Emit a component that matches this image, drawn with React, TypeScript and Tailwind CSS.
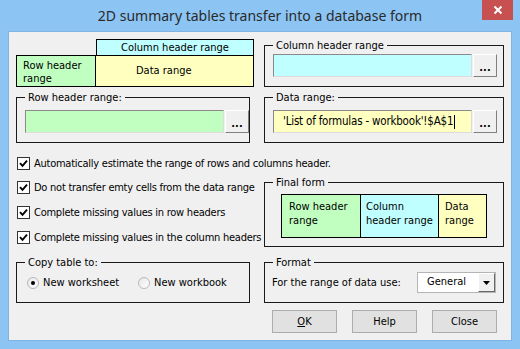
import React from "react";

const FONT = { fontFamily: '"DejaVu Sans Condensed", "Liberation Sans", sans-serif' };

function Group({
  title,
  className,
  children,
}: {
  title: string;
  className: string;
  children: React.ReactNode;
}) {
  return (
    <fieldset className={`border border-[#1a1a1a] ${className}`}>
      <legend className="ml-[8px] px-[3px] leading-[13px]">{title}</legend>
      {children}
    </fieldset>
  );
}

function Check({ label }: { label: string }) {
  return (
    <div className="flex items-center h-[13px] gap-[4px]">
      <span className="w-[13px] h-[13px] border border-[#333] bg-white flex items-center justify-center shrink-0">
        <svg width="9" height="9" viewBox="0 0 9 9">
          <path d="M1 4.2 L3.5 6.8 L8 1.6" stroke="#000" strokeWidth="1.9" fill="none" />
        </svg>
      </span>
      <span className="leading-[13px] whitespace-nowrap tracking-[-0.25px]">{label}</span>
    </div>
  );
}

function Radio({ label, on }: { label: string; on?: boolean }) {
  return (
    <div className="flex items-center gap-[4px] h-[13px]">
      <span className="w-[12px] h-[12px] rounded-full border border-[#b8b8b8] bg-gradient-to-br from-[#e6e6e6] to-white flex items-center justify-center shrink-0">
        {on && <span className="w-[4px] h-[4px] rounded-full bg-black" />}
      </span>
      <span className="leading-[13px] whitespace-nowrap">{label}</span>
    </div>
  );
}

function RangeInput({ bg, value }: { bg: string; value?: string }) {
  return (
    <div className="flex h-[23px]">
      <div
        className={`flex-1 flex items-center border border-t-[#8a8a8a] border-l-[#8a8a8a] border-b-[#dcdcdc] border-r-[#dcdcdc] pl-[9px] ${bg}`}
      >
        {value && (
          <span className="text-[11.5px] leading-[14px] whitespace-nowrap tracking-[-0.2px]">
            {value}
            <span className="inline-block w-px h-[14px] bg-black align-middle ml-px" />
          </span>
        )}
      </div>
      <button className="w-[24px] ml-px bg-[#f0f0f0] border border-t-white border-l-white border-b-[#808080] border-r-[#808080] flex items-end justify-center pb-[4px] text-[11px] leading-[8px] font-bold">
        ...
      </button>
    </div>
  );
}

function Btn({ children }: { children: React.ReactNode }) {
  return (
    <button className="w-[65px] h-[23px] bg-[#e1e1e1] border border-[#adadad] flex items-center justify-center leading-[13px]">
      {children}
    </button>
  );
}

export default function App() {
  return (
    <div className="w-[520px] h-[349px] bg-[#8cc4f4] flex flex-col text-[11px] text-black" style={FONT}>
      <div className="h-[31px] flex items-center relative shrink-0">
        <p
          className="flex-1 text-center text-[14px] text-[#2a2a2a] leading-[20px] pt-[1px]"
          style={{ fontFamily: '"Noto Sans", "Open Sans", sans-serif' }}
        >
          2D summary tables transfer into a database form
        </p>
        <button className="absolute right-[7px] top-0 w-[31px] h-[20px] bg-[#c75050] flex items-center justify-center">
          <svg width="10" height="10" viewBox="0 0 10 10">
            <path d="M1.5 1.5 L8.5 8.5 M8.5 1.5 L1.5 8.5" stroke="#fff" strokeWidth="2" />
          </svg>
        </button>
      </div>

      <div className="mx-[8px] h-[310px] bg-[#f0f0f0] border border-[#7fb3e3] px-[7px] pt-[7px] flex flex-col">
        {/* row 1 */}
        <div className="grid grid-cols-[234px_240px] gap-x-[14px]">
          <div className="grid grid-cols-[80px_158px] grid-rows-[17px_32px] w-[238px] h-[48px]">
            <div />
            <div className="border border-black bg-[#c0ffff] flex items-center justify-center leading-[13px]">
              Column header range
            </div>
            <div className="border border-black -mt-px h-[32px] bg-[#c0ffc0] pl-[6px] pt-[3px] leading-[13px] overflow-hidden">
              Row header
              <br />
              range
            </div>
            <div className="border border-black -mt-px -ml-px h-[32px] bg-[#ffffc0] flex items-center pl-[40px]">
              Data range
            </div>
          </div>
          <Group title="Column header range" className="h-[48px]">
            <div className="mt-[2px] pl-[8px] pr-[6px]">
              <RangeInput bg="bg-[#c0ffff]" />
            </div>
          </Group>
        </div>

        {/* row 2 */}
        <div className="grid grid-cols-[234px_240px] gap-x-[14px] mt-[4px]">
          <Group title="Row header range:" className="h-[52px]">
            <div className="mt-[6px] pl-[8px] pr-0">
              <RangeInput bg="bg-[#c0ffc0]" />
            </div>
          </Group>
          <Group title="Data range:" className="h-[52px]">
            <div className="mt-[6px] pl-[8px] pr-[6px]">
              <RangeInput bg="bg-[#ffffc0]" value="'List of formulas - workbook'!$A$1" />
            </div>
          </Group>
        </div>

        {/* row 3 */}
        <div className="mt-[14px] pl-[1px]">
          <Check label="Automatically estimate the range of rows and columns header." />
        </div>

        {/* row 4 */}
        <div className="grid grid-cols-[234px_240px] gap-x-[14px] mt-[6px]">
          <div className="flex flex-col pl-[1px] pt-[5px] gap-[12px]">
            <Check label="Do not transfer emty cells from the data range" />
            <Check label="Complete missing values in row headers" />
            <Check label="Complete missing values in the column headers" />
          </div>
          <Group title="Final form" className="h-[71px]">
            <div className="mt-[5px] pl-[16px]">
              <div className="flex h-[44px] w-[206px] leading-[14px]">
                <div className="w-[80px] border border-black bg-[#c0ffc0] pl-[7px] pt-[5px]">
                  Row header
                  <br />
                  range
                </div>
                <div className="w-[79px] border border-black -ml-px bg-[#c0ffff] pl-[5px] pt-[5px]">
                  Column
                  <br />
                  header range
                </div>
                <div className="w-[49px] border border-black -ml-px bg-[#ffffc0] pl-[6px] pt-[5px]">
                  Data
                  <br />
                  range
                </div>
              </div>
            </div>
          </Group>
        </div>

        {/* row 5 */}
        <div className="grid grid-cols-[234px_240px] gap-x-[14px] mt-[9px]">
          <Group title="Copy table to:" className="h-[47px]">
            <div className="mt-[7px] pl-[10px] flex">
              <div className="w-[111px]">
                <Radio label="New worksheet" on />
              </div>
              <Radio label="New workbook" />
            </div>
          </Group>
          <Group title="Format" className="h-[47px]">
            <div className="mt-[3px] pl-[7px] flex items-center">
              <span className="w-[145px] leading-[13px] whitespace-nowrap">For the range of data use:</span>
              <div className="w-[79px] h-[21px] bg-white border border-[#b5b5b5] flex">
                <span className="flex-1 pl-[9px] pt-[2px] leading-[13px]">General</span>
                <span className="w-[17px] bg-[#f0f0f0] border border-t-white border-l-white border-b-[#6a6a6a] border-r-[#6a6a6a] flex items-center justify-center">
                  <svg width="7" height="4" viewBox="0 0 7 4">
                    <path d="M0 0 H7 L3.5 4 Z" fill="#000" />
                  </svg>
                </span>
              </div>
            </div>
          </Group>
        </div>

        {/* buttons */}
        <div className="mt-[7px] flex justify-end gap-[15px] pr-[7px]">
          <Btn>
            <span className="underline">O</span>K
          </Btn>
          <Btn>Help</Btn>
          <Btn>Close</Btn>
        </div>
      </div>
    </div>
  );
}
